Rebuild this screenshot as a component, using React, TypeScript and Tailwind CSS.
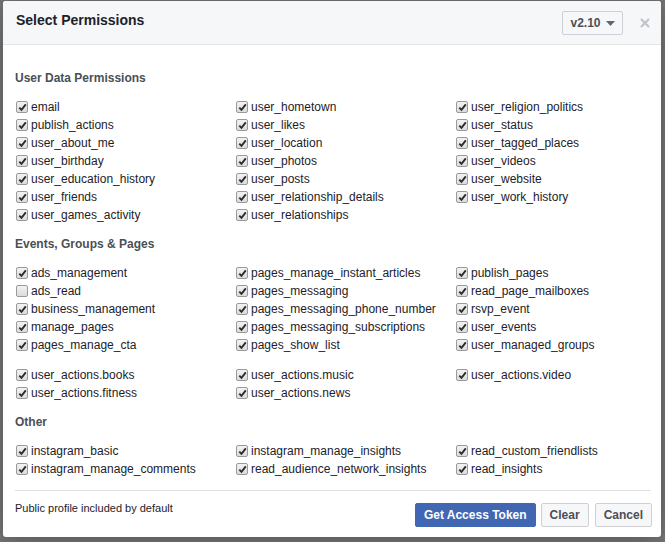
import type { ReactNode } from "react"

type Perm = { name: string; checked?: boolean }

const userData: Perm[] = [
  "email", "user_hometown", "user_religion_politics",
  "publish_actions", "user_likes", "user_status",
  "user_about_me", "user_location", "user_tagged_places",
  "user_birthday", "user_photos", "user_videos",
  "user_education_history", "user_posts", "user_website",
  "user_friends", "user_relationship_details", "user_work_history",
  "user_games_activity", "user_relationships",
].map((name) => ({ name, checked: true }))

const events: Perm[] = [
  { name: "ads_management", checked: true },
  { name: "pages_manage_instant_articles", checked: true },
  { name: "publish_pages", checked: true },
  { name: "ads_read", checked: false },
  { name: "pages_messaging", checked: true },
  { name: "read_page_mailboxes", checked: true },
  { name: "business_management", checked: true },
  { name: "pages_messaging_phone_number", checked: true },
  { name: "rsvp_event", checked: true },
  { name: "manage_pages", checked: true },
  { name: "pages_messaging_subscriptions", checked: true },
  { name: "user_events", checked: true },
  { name: "pages_manage_cta", checked: true },
  { name: "pages_show_list", checked: true },
  { name: "user_managed_groups", checked: true },
]

const actions: Perm[] = [
  "user_actions.books", "user_actions.music", "user_actions.video",
  "user_actions.fitness", "user_actions.news",
].map((name) => ({ name, checked: true }))

const other: Perm[] = [
  "instagram_basic", "instagram_manage_insights", "read_custom_friendlists",
  "instagram_manage_comments", "read_audience_network_insights", "read_insights",
].map((name) => ({ name, checked: true }))

const CheckBox = ({ checked }: { checked?: boolean }) => (
  <span className="ml-[1px] mr-[3px] flex h-[12px] w-[12px] shrink-0 items-center justify-center rounded-[2px] border border-[#9a9a9a] bg-gradient-to-b from-[#f2f2f2] to-[#dcdcdc]">
    {checked && (
      <svg width="9" height="9" viewBox="0 0 9 9">
        <path d="M1.3 4.6 L3.5 6.9 L7.8 1.4" fill="none" stroke="#2b2b2b" strokeWidth="1.9" />
      </svg>
    )}
  </span>
)

const PermGrid = ({ items }: { items: Perm[] }) => (
  <div className="grid grid-cols-[220px_220px_220px]">
    {items.map((p) => (
      <label key={p.name} className="flex h-[18px] items-center text-[12px] text-[#1d2129]">
        <CheckBox checked={p.checked} />
        <span>{p.name}</span>
      </label>
    ))}
  </div>
)

const Section = ({ title, children }: { title: string; children: ReactNode }) => (
  <div className="mb-[11px]">
    <h3 className="mb-[11px] h-[18px] text-[12px] font-bold leading-[18px] text-[#4b4f56]">{title}</h3>
    {children}
  </div>
)

export default function App() {
  return (
    <div className="h-[542px] w-[665px] overflow-hidden bg-[#767676] pt-[1px] pl-[3px] font-['Liberation_Sans',Arial,sans-serif]">
      <div className="flex h-[536px] w-[658px] flex-col overflow-hidden rounded-[3px] bg-white shadow-[0_2px_26px_rgba(0,0,0,0.3)]">
        <div className="flex h-[44px] shrink-0 items-center border-b border-[#e5e5e5] bg-[#f6f7f9] pl-[13px] pr-[10px]">
          <h2 className="flex-1 pb-[5px] text-[14px] font-bold text-[#1d2129]">Select Permissions</h2>
          <button className="mt-[1px] flex h-[24px] w-[61px] items-center justify-center gap-[5px] rounded-[2px] border border-[#ccd0d5] bg-[#f6f7f9] text-[12px] font-bold text-[#4b4f56]">
            v2.10
            <svg width="9" height="5" viewBox="0 0 9 5">
              <path d="M0 0 H9 L4.5 5 Z" fill="#606770" />
            </svg>
          </button>
          <button className="ml-[16px] flex h-[20px] w-[12px] items-center justify-center">
            <svg width="10" height="10" viewBox="0 0 10 10">
              <path d="M1 1 L9 9 M9 1 L1 9" stroke="#bec2c9" strokeWidth="2" />
            </svg>
          </button>
        </div>

        <div className="px-[12px] pt-[24px]">
          <Section title="User Data Permissions">
            <PermGrid items={userData} />
          </Section>
          <Section title="Events, Groups & Pages">
            <PermGrid items={events} />
            <div className="h-[12px]" />
            <PermGrid items={actions} />
          </Section>
          <Section title="Other">
            <PermGrid items={other} />
          </Section>
          <div className="mr-[-2px] mt-[12px] border-t border-[#dddfe2]" />
        </div>

        <div className="flex items-start justify-between pl-[12px] pr-[9px] pt-[12px]">
          <p className="-mt-[3px] text-[11px] text-[#1d2129]">Public profile included by default</p>
          <div className="flex gap-[5px]">
            <button className="h-[24px] rounded-[2px] border border-[#4267b2] bg-[#4267b2] px-[8px] text-[12px] font-bold text-white">
              Get Access Token
            </button>
            <button className="h-[24px] rounded-[2px] border border-[#ced0d4] bg-[#f6f7f9] px-[8px] text-[12px] font-bold text-[#4b4f56]">
              Clear
            </button>
            <button className="ml-[1px] h-[24px] rounded-[2px] border border-[#ced0d4] bg-[#f6f7f9] px-[8px] text-[12px] font-bold text-[#4b4f56]">
              Cancel
            </button>
          </div>
        </div>
      </div>
    </div>
  )
}
